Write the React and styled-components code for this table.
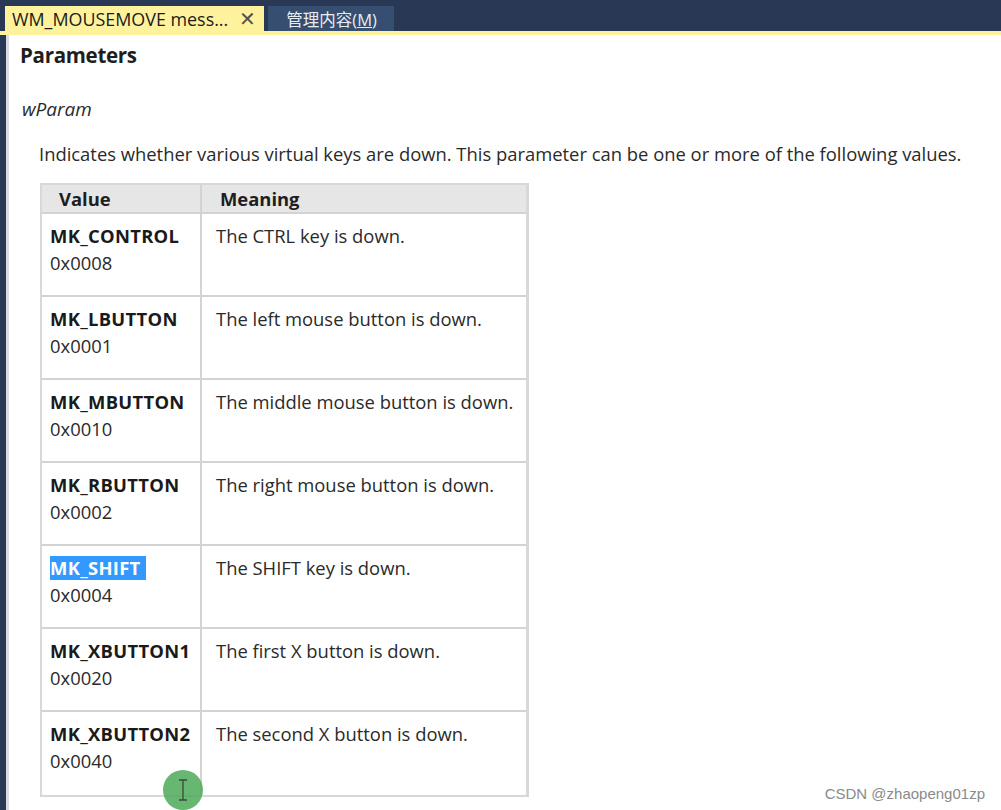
import React from "react";
import styled, { createGlobalStyle } from "styled-components";

const GlobalStyle = createGlobalStyle`
  html, body {
    margin: 0;
    padding: 0;
    background: #ffffff;
  }
  body {
    font-family: "Open Sans", "Noto Sans", sans-serif;
  }
  * {
    box-sizing: border-box;
  }
`;

const rows = [
  { name: "MK_CONTROL", code: "0x0008", meaning: "The CTRL key is down." },
  { name: "MK_LBUTTON", code: "0x0001", meaning: "The left mouse button is down." },
  { name: "MK_MBUTTON", code: "0x0010", meaning: "The middle mouse button is down." },
  { name: "MK_RBUTTON", code: "0x0002", meaning: "The right mouse button is down." },
  { name: "MK_SHIFT", code: "0x0004", meaning: "The SHIFT key is down.", selected: true },
  { name: "MK_XBUTTON1", code: "0x0020", meaning: "The first X button is down." },
  { name: "MK_XBUTTON2", code: "0x0040", meaning: "The second X button is down." },
];

const Page = styled.div`
  width: 1001px;
  height: 810px;
  display: flex;
  flex-direction: column;
  overflow: hidden;
  position: relative;
  background: #ffffff;
`;

const TabBar = styled.div`
  height: 31px;
  background: #293955;
  display: flex;
  align-items: flex-end;
  padding-left: 5px;
  gap: 4px;
  flex-shrink: 0;
`;

const Tab = styled.div`
  height: 25px;
  display: flex;
  align-items: center;
  gap: 11px;
  padding: ${({ active }) => (active ? "0 8px 0 7px" : "0 17px 0 18px")};
  background: ${({ active }) => (active ? "#fff29d" : "#364e6f")};
  color: ${({ active }) => (active ? "#1b1b1b" : "#e8ecf2")};
  font-family: "Open Sans", "Noto Sans CJK SC", sans-serif;
  white-space: nowrap;
`;

const TabLabel = styled.span`
  font-size: ${({ cjk }) => (cjk ? "16.5px" : "17.9px")};
`;

const Close = styled.span`
  font-size: 20px;
  color: #5a5040;
  line-height: 1;
`;

const TabStrip = styled.div`
  height: 4px;
  background: #fff29d;
  flex-shrink: 0;
`;

const Body = styled.div`
  flex: 1;
  display: flex;
`;

const LeftEdge = styled.div`
  width: 9px;
  background: #293955;
  border-right: 3px solid #d8dbe0;
  flex-shrink: 0;
`;

const Content = styled.div`
  flex: 1;
  padding: 6px 0 0 11px;
  color: #1e1e1e;
`;

const Heading = styled.div`
  font-size: 20.5px;
  font-weight: 700;
  letter-spacing: -0.3px;
  line-height: 28px;
`;

const ParamName = styled.div`
  margin-top: 27px;
  margin-left: 2px;
  font-size: 19px;
  font-style: italic;
  color: #2a2a2a;
  line-height: 26px;
`;

const Desc = styled.div`
  margin-top: 19px;
  margin-left: 19px;
  font-size: 18.4px;
  color: #2a2a2a;
  line-height: 26px;
  white-space: nowrap;
`;

const Table = styled.div`
  margin-top: 16px;
  margin-left: 20px;
  width: 489px;
  display: grid;
  grid-template-columns: 160px 1fr;
  border: 2px solid #d8d8d8;
  border-right-width: 3px;
`;

const HeadCell = styled.div`
  height: 29px;
  background: #e6e6e6;
  border-bottom: 2px solid #d3d3d3;
  border-right: ${({ last }) => (last ? "none" : "2px solid #d3d3d3")};
  font-weight: 700;
  font-size: 18.4px;
  padding-left: ${({ last }) => (last ? "18px" : "17px")};
  display: flex;
  align-items: center;
  color: #1e1e1e;
`;

const Cell = styled.div`
  height: 83px;
  border-bottom: ${({ bottom }) => (bottom ? "none" : "2px solid #d3d3d3")};
  border-right: ${({ last }) => (last ? "none" : "2px solid #d3d3d3")};
  padding: 8px 0 0 ${({ last }) => (last ? "14px" : "8px")};
  font-size: 18.4px;
  line-height: 27px;
  color: #2a2a2a;
  white-space: nowrap;
`;

const Name = styled.span`
  font-weight: 700;
  letter-spacing: 0.3px;
  color: ${({ selected }) => (selected ? "#ffffff" : "#1a1a1a")};
  background: ${({ selected }) => (selected ? "#3399ff" : "transparent")};
  padding-right: ${({ selected }) => (selected ? "5px" : "0")};
  display: inline-block;
  line-height: 24px;
`;

const Code = styled.div``;

const CursorDot = styled.div`
  position: absolute;
  left: 163px;
  top: 770px;
  width: 40px;
  height: 40px;
  border-radius: 50%;
  background: rgba(76, 170, 90, 0.85);
  display: flex;
  align-items: center;
  justify-content: center;
`;

const Watermark = styled.div`
  position: absolute;
  right: 16px;
  bottom: 8px;
  font-family: "Liberation Sans", "Noto Sans", sans-serif;
  font-size: 15px;
  color: #8a8a8a;
`;

export default function App() {
  return (
    <Page>
      <GlobalStyle />
      <TabBar>
        <Tab active>
          <TabLabel>WM_MOUSEMOVE mess...</TabLabel>
          <Close>✕</Close>
        </Tab>
        <Tab>
          <TabLabel cjk>
            管理内容(<u>M</u>)
          </TabLabel>
        </Tab>
      </TabBar>
      <TabStrip />
      <Body>
        <LeftEdge />
        <Content>
          <Heading>Parameters</Heading>
          <ParamName>wParam</ParamName>
          <Desc>
            Indicates whether various virtual keys are down. This parameter can be one or more of the following values.
          </Desc>
          <Table>
            <HeadCell>Value</HeadCell>
            <HeadCell last>Meaning</HeadCell>
            {rows.map((r, i) => (
              <React.Fragment key={r.name}>
                <Cell bottom={i === rows.length - 1}>
                  <Name selected={r.selected}>{r.name}</Name>
                  <Code>{r.code}</Code>
                </Cell>
                <Cell last bottom={i === rows.length - 1}>
                  {r.meaning}
                </Cell>
              </React.Fragment>
            ))}
          </Table>
        </Content>
      </Body>
      <CursorDot>
        <svg width="12" height="22" viewBox="0 0 12 22">
          <path d="M2 1h8M6 1v20M2 21h8" stroke="#3a4a3a" strokeWidth="1.3" fill="none" />
        </svg>
      </CursorDot>
      <Watermark>CSDN @zhaopeng01zp</Watermark>
    </Page>
  );
}
